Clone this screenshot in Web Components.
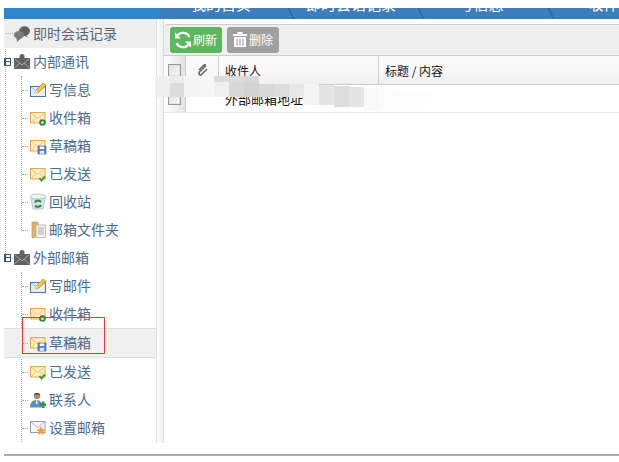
<!doctype html>
<html lang="zh">
<head>
<meta charset="utf-8">
<title>mail</title>
<style>
html,body{margin:0;padding:0;background:#fff;overflow:hidden}
body{font:14px "Noto Sans CJK SC","Liberation Sans",sans-serif}
</style>
</head>
<body>
<mail-app>
  <top-nav slot="nav">
    <nav-tab>我的首页</nav-tab><nav-tab>即时会话记录</nav-tab><nav-tab>写信息</nav-tab><nav-tab>收件箱</nav-tab>
  </top-nav>
  <side-tree slot="side">
    <tree-row kind="head" icon="chat">即时会话记录</tree-row>
    <tree-group label="内部通讯" tail="14">
      <tree-row icon="compose">写信息</tree-row>
      <tree-row icon="inbox">收件箱</tree-row>
      <tree-row icon="draft">草稿箱</tree-row>
      <tree-row icon="sent">已发送</tree-row>
      <tree-row icon="recycle">回收站</tree-row>
      <tree-row icon="folder">邮箱文件夹</tree-row>
    </tree-group>
    <tree-group label="外部邮箱" tail="0">
      <tree-row icon="compose">写邮件</tree-row>
      <tree-row icon="inbox">收件箱</tree-row>
      <tree-row icon="draft" active>草稿箱</tree-row>
      <tree-row icon="sent">已发送</tree-row>
      <tree-row icon="contact">联系人</tree-row>
      <tree-row icon="settings">设置邮箱</tree-row>
    </tree-group>
  </side-tree>
  <mail-list slot="main">
    <tool-btn slot="tools" color="#5cb85c" icon="refresh">刷新</tool-btn>
    <tool-btn slot="tools" color="#a0a0a0" icon="trash">删除</tool-btn>
  </mail-list>
  <mosaic-patch slot="over"></mosaic-patch>
  <red-mark slot="over"></red-mark>
</mail-app>

<script>
var ENV = '<rect x="0.5" y="2.5" width="14.5" height="10.5" fill="#fdf0c6" stroke="#e3a94a"/><path d="M1 3l6.700 5.500L14.500 3M1 13l4.500-5M14.500 13L10 8" fill="none" stroke="#ecc07a"/>';
var ICONS = {
  chat: '<ellipse cx="10.500" cy="5" rx="5.500" ry="4.700" fill="#606060"/><ellipse cx="5" cy="9" rx="5" ry="4" fill="#7a7a7a"/><path d="M2.500 11.500L3 16l4-3.500z" fill="#7a7a7a"/><path d="M12 8l1.500 3.500L9 9z" fill="#606060"/>',
  box: '<path d="M0 4h5l3-1 3 1h5v11H0z" fill="#626262"/><path d="M0.500 14l5.500-5 2 2 2-2 5.500 5M1 5l7 6 7-6" fill="none" stroke="#a5a5a5"/><circle cx="8" cy="2.500" r="2.500" fill="#626262"/>',
  compose: '<rect x="0.500" y="4.500" width="15" height="10" fill="#e6eef8" stroke="#4a76ad"/><path d="M1 5l7 5 7-5" fill="none" stroke="#9db7d6"/><path d="M5 11l1-3 7-7 3 2-7 7z" fill="#f2c04c" stroke="#c98a2a" stroke-width=".7"/><path d="M5 11l1-3 2 2z" fill="#fff2c8"/>',
  inbox: ENV + '<circle cx="12.500" cy="12.500" r="3.300" fill="#2f8a3c"/><circle cx="12.500" cy="12.500" r="1.500" fill="#cfe9c9"/>',
  draft: ENV + '<rect x="8" y="8" width="8" height="8" fill="#5b80c0" stroke="#3d5f9c" stroke-width=".6"/><rect x="9.700" y="8.500" width="4.500" height="2.500" fill="#fff"/><rect x="9.700" y="12.800" width="4.500" height="3" fill="#dfe8f4"/>',
  sent: ENV + '<path d="M9.500 12l2 2.500 3.500-4" fill="none" stroke="#3f9a3a" stroke-width="2"/>',
  recycle: '<path d="M0.500 2.500l2.500 12.500h10l2.500-12.500z" fill="#d7e6ee" stroke="#a9bccb" stroke-width=".7"/><ellipse cx="8" cy="2.500" rx="8" ry="2.500" fill="#eef5f8" stroke="#9fb4c4" stroke-width=".7"/><path d="M5 8.500c1-2.500 4.500-2.500 6-.5M11 11c-1 2-4.500 2.500-6 .5" fill="none" stroke="#2f8f3c" stroke-width="2.200"/>',
  folder: '<path d="M2 0h6v14l-6 2z" fill="#e3b56a" stroke="#b98a3e" stroke-width=".6"/><rect x="6" y="3" width="9.500" height="12.500" fill="#f4f4ee" stroke="#a5a598" stroke-width=".7"/><path d="M8 6h6M8 8h6M8 10h6M8 12h6" stroke="#9a9a9a" stroke-width=".8"/>',
  contact: '<circle cx="7" cy="4" r="3.200" fill="#b98a68"/><path d="M3.800 3.500C3.800 0 10.200 0 10.200 3.500L9 2.500H5z" fill="#4a3a30"/><path d="M0 15.500c0-5.500 3-7.500 6.500-7.500s6 2 6 7.500z" fill="#5b8fc4"/><path d="M6 8.500h1.500V12H6z" fill="#fff"/><path d="M10 11.500h2v-2h2.500v2h1.500v2.500h-1.500v2H12v-2h-2z" fill="#2e9a44"/>',
  settings: '<rect x="0.500" y="1.500" width="14.500" height="11" fill="#f5f5f7" stroke="#9a9aa2"/><path d="M1 2l6.700 5.500L14.500 2" fill="none" stroke="#b8b8c2"/><path d="M11 6l1.400 3 3.200.4-2.300 2.200.6 3.200-2.900-1.600-2.900 1.600.6-3.200-2.300-2.200 3.200-.4z" fill="#f39a3a"/>',
  refresh: '<path d="M15.500 6A7 7 0 0 0 3.500 4.500M2.500 12A7 7 0 0 0 14.500 13.500" fill="none" stroke="#fff" stroke-width="2.200"/><path d="M1 1.500v6h6zM17 16.500v-6h-6z" fill="#fff"/>',
  trash: '<path d="M0 3h14v2H0zM4.500 1h5v2h-5z" fill="#fff"/><path d="M1 6h12v10H1z" fill="#fff"/><path d="M4 7.500v7M7 7.500v7M10 7.500v7" stroke="#a0a0a0" stroke-width="1.200"/>'
};

function define(name, css, html, setup) {
  customElements.define(name, class extends HTMLElement {
    connectedCallback() {
      if (this.shadowRoot) return;
      var root = this.attachShadow({ mode: 'open' });
      root.innerHTML = '<style>' + css + '</style>' + (typeof html === 'function' ? html(this) : html);
      if (setup) setup(this, root);
    }
  });
}

define('mail-app',
  ':host{display:block;position:relative;width:619px;height:462px;padding:8px 0 0 4px;box-sizing:border-box}' +
  '.body{display:flex;height:424px}' +
  '.side{flex:0 0 152px;border-right:1px solid #ddd;overflow:hidden}' +
  '.gutter{flex:0 0 6px;background:linear-gradient(90deg,#fff,#eee)}' +
  '.main{flex:1;min-width:0;border-left:1px solid #ddd;padding-top:5px}' +
  '.foot{margin-top:11px;height:2px;background:#aaa}',
  '<slot name="nav"></slot><div class="body"><div class="side"><slot name="side"></slot></div><div class="gutter"></div><div class="main"><slot name="main"></slot></div></div><div class="foot"></div><slot name="over"></slot>');

define('top-nav',
  ':host{display:flex;height:11px;overflow:hidden;padding-left:158px;background:linear-gradient(90deg,#2f85c9 0,#2f85c9 152px,#3d7dbc 160px)}',
  '<slot></slot>');

define('nav-tab',
  ':host{display:block;flex:0 0 130px;height:11px;position:relative;color:#fff;font-size:15px;line-height:20px;text-align:center;white-space:nowrap;box-sizing:border-box;padding-right:12px}' +
  '.t{display:block;margin-top:-14px}' +
  ':host::after{content:"";position:absolute;right:0;top:0;height:11px;width:2px;background:#2f6a9f;transform:skewX(25deg)}',
  '<span class="t"><slot></slot></span>');

define('side-tree',
  ':host{display:block;position:relative}' +
  ':host::before{content:"";position:absolute;left:1px;top:15px;height:224px;border-left:1px dotted #aaa}',
  '<slot></slot>');

define('tree-icon',
  ':host{display:block;width:16px;height:16px;flex:none}svg{display:block;overflow:visible}',
  function (el) {
    return '<svg width="16" height="16" viewBox="0 0 16 16">' + ICONS[el.getAttribute('name')] + '</svg>';
  });

define('tree-row',
  ':host{display:flex;align-items:center;gap:3px;height:28px;box-sizing:border-box;padding-left:26px;position:relative;color:#4a6b8d;white-space:nowrap;line-height:20px}' +
  ':host::before{content:"";position:absolute;left:18px;top:14px;width:6px;border-top:1px dotted #aaa}' +
  ':host([kind=head]){height:29px;padding-left:10px;background:#eee;color:#5a6676}' +
  ':host([kind=head])::before{left:2px;width:7px}' +
  ':host([kind=group]){padding-left:10px}' +
  ':host([kind=group])::before{left:6px;width:3px}' +
  ':host([active]){height:30px;background:#f0f0f0;border-top:1px solid #ddd;border-bottom:1px solid #ddd}' +
  '.l{display:block;margin-top:-2px}' +
  '.x{position:absolute;left:0;top:10px;width:4px;height:6px;border:1px solid #3b4f73;border-left-width:2px;background:linear-gradient(#fff 0 2px,#3b4f73 2px 3px,#fff 3px)}',
  function (el) {
    var box = el.getAttribute('kind') === 'group' ? '<span class="x"></span>' : '';
    return box + '<tree-icon name="' + el.getAttribute('icon') + '"></tree-icon><span class="l"><slot></slot></span>';
  });

define('tree-group',
  ':host{display:block}' +
  '.kids{position:relative}' +
  '.kids::before{content:"";position:absolute;left:17px;top:0;bottom:var(--tail);border-left:1px dotted #aaa}',
  function (el) {
    return '<tree-row kind="group" icon="box">' + el.getAttribute('label') + '</tree-row>' +
      '<div class="kids" style="--tail:' + el.getAttribute('tail') + 'px"><slot></slot></div>';
  });

define('tool-btn',
  ':host{display:flex;align-items:center;height:26px;width:52px;box-sizing:border-box;border-radius:3px;color:#fff;font-size:12px;line-height:16px;padding-left:4px;gap:1px;white-space:nowrap}' +
  ':host([icon=trash]){padding-left:6px;gap:1px}' +
  '.l{display:block;margin-top:-1px}',
  function (el) {
    el.style.background = el.getAttribute('color');
    var w = el.getAttribute('icon') === 'trash' ? 15 : 18;
    return '<svg width="' + w + '" height="18" viewBox="0 0 ' + w + ' 18" style="flex:none;display:block">' + ICONS[el.getAttribute('icon')] + '</svg><span class="l"><slot></slot></span>';
  });

define('check-box',
  ':host{display:block;width:13px;height:13px;box-sizing:border-box;border:1px solid #999;background:linear-gradient(135deg,#ddd,#fafafa);box-shadow:inset 0 0 0 1px #e4e4e4}',
  '');

define('mail-list',
  ':host{display:block;color:#111}' +
  '.tools{display:flex;gap:5px;padding:2px 6px;box-sizing:border-box;background:#efefef;border-top:1px solid #ccc;border-bottom:1px solid #ccc;height:32px;border-top-left-radius:4px}' +
  '.row{display:grid;box-sizing:border-box;grid-template-columns:22px 33px 160px 1fr;line-height:20px}' +
  '.row>div{display:flex;align-items:center;box-sizing:border-box;white-space:nowrap;overflow:hidden}' +
  '.head{height:29px;font-size:12px;background:linear-gradient(#f9f9f9 0 50%,#f0f0f2);border-bottom:1px solid #ccc}' +
  '.head>div{border-right:1px solid #ccc;padding-left:6px;padding-top:2px}' +
  '.head>div:last-child{border-right:0}' +
  '.head>div:first-child,.body>div:first-child{padding-left:4px;padding-top:0;background:linear-gradient(90deg,#fff,#e2e2e2);border-right:1px solid #ccc}' +
  '.body{height:28px;font-size:13px;border-bottom:1px solid #e6e6e6}' +
  '.body>div{padding-left:6px}' +
  '.clip{justify-content:center}',
  '<div class="tools"><slot name="tools"></slot></div>' +
  '<div class="row head"><div><check-box></check-box></div>' +
  '<div class="clip" style="padding:0"><svg width="11" height="12" viewBox="0 0 11 12"><path d="M9 1.500L2.500 8c-1.500 2 .5 3.500 2 2.500L10 5M9 1.500C8 .7 7 1 6.500 1.500L2 6" fill="none" stroke="#666" stroke-width="1.600"/></svg></div>' +
  '<div>收件人</div><div>标题 / 内容</div></div>' +
  '<div class="row body"><div><check-box></check-box></div><div></div><div>外部邮箱地址</div><div></div></div>');

// the smudged-out part of the shot, column by column: x, top, height, colour
var PATCH = [
  [155,76,21,'#efefef'],[170,83,14,'#dcdcdc'],[170,76,7,'#ececec'],[184,76,21,'#f5f5f5'],[199,76,21,'#f7f7f7'],
  [214,76,6,'#dcdcdc'],[214,82,15,'#f0f0f0'],[229,76,6,'#dcdcdc'],[229,82,15,'#d8d8d8'],[244,76,6,'#d8d8d8'],[244,82,15,'#d3d3d3'],
  [259,84,13,'#d8d8d8'],[274,84,13,'#dddddd'],[289,84,14,'#e8e8e8'],[304,84,21,'#f4f4f4'],[319,85,20,'#e5e5e5'],
  [334,86,21,'#dddddd'],[349,87,20,'#e5e5e5'],[364,88,23,'#f9f9f9'],[379,89,22,'#fcfcfc'],[394,90,21,'#fdfdfd'],[430,92,19,'#fefefe']
];
define('mosaic-patch',
  ':host{display:block;position:absolute;left:0;top:0}i{position:absolute;display:block;width:15px}',
  function () {
    return PATCH.map(function (p) {
      return '<i style="left:' + p[0] + 'px;top:' + p[1] + 'px;height:' + p[2] + 'px;background:' + p[3] + (p[0] === 430 ? ';width:55px' : p[0] === 394 ? ';width:36px' : '') + '"></i>';
    }).join('');
  });

define('red-mark',
  ':host{display:block;position:absolute;left:22px;top:317px;width:83px;height:37px;box-sizing:border-box;border:1px solid #e8383a}',
  '');
</script>
</body>
</html>
